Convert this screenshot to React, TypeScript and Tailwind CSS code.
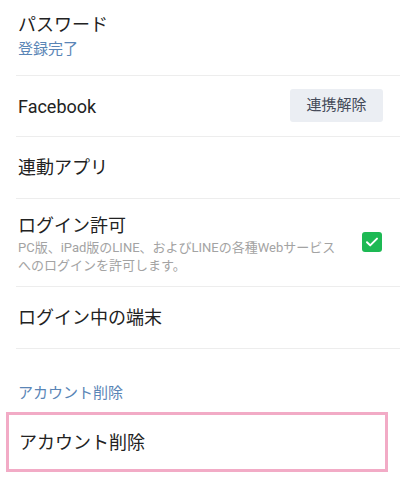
import React from 'react';

const font = { fontFamily: '"Roboto", "Noto Sans CJK JP", sans-serif' };

const Row = ({ children, className = '' }: { children: React.ReactNode; className?: string }) => (
  <div className={`ml-4 border-b border-[#ededed] pr-[18px] flex items-center ${className}`}>{children}</div>
);

export default function App() {
  return (
    <div className="w-[400px] h-[479px] bg-white overflow-hidden text-[#222]" style={font}>
      <div className="ml-4 border-b border-[#ededed] h-[76px] pt-[12px] pl-[2px]">
        <div className="text-[18px] leading-[26px]">パスワード</div>
        <div className="text-[15px] leading-[22px] text-[#5a85b6]">登録完了</div>
      </div>

      <Row className="h-[61px] justify-between pl-[2px]">
        <span className="text-[18px]">Facebook</span>
        <button className="w-[93px] h-[33px] -mt-[2px] -mr-[1px] rounded-[3px] bg-[#ebeef3] text-[15px] text-[#454b5a]">
          連携解除
        </button>
      </Row>

      <Row className="h-[62px] pl-[2px]">
        <span className="text-[18px]">連動アプリ</span>
      </Row>

      <Row className="h-[88px] justify-between pl-[2px]">
        <div className="pt-[2px]">
          <div className="text-[18px] leading-[26px]">ログイン許可</div>
          <div className="text-[13px] leading-[18px] text-[#a3a3a3]">
            PC版、iPad版のLINE、およびLINEの各種Webサービス
            <br />
            へのログインを許可します。
          </div>
        </div>
        <div className="w-5 h-5 rounded-[3px] bg-[#1db954] flex items-center justify-center -mt-[2px]">
          <svg width="14" height="14" viewBox="0 0 14 14" fill="none">
            <path d="M2 7.3l3.2 3.1L12 3.6" stroke="white" strokeWidth="2" strokeLinecap="round" strokeLinejoin="round" />
          </svg>
        </div>
      </Row>

      <Row className="h-[62px] pl-[2px]">
        <span className="text-[18px]">ログイン中の端末</span>
      </Row>

      <div className="h-[63px] flex items-end pl-[18px] pb-[8px]">
        <span className="text-[15px] text-[#5a85b6]">アカウント削除</span>
      </div>

      <div className="ml-[6px] w-[382px] h-[60px] border-[3px] border-[#f2abc6] flex items-center pl-[10px]">
        <span className="text-[18px]">アカウント削除</span>
      </div>
    </div>
  );
}
